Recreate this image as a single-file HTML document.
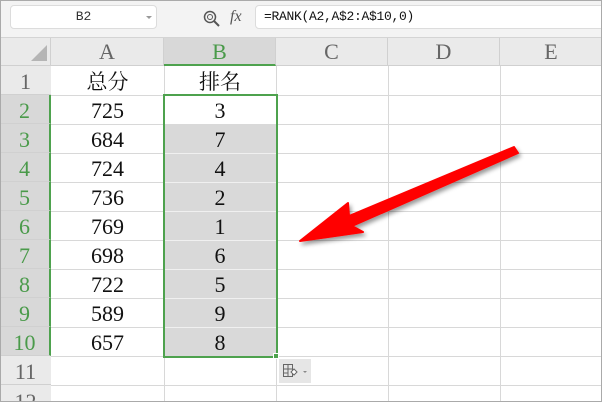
<!DOCTYPE html>
<html><head><style>
*{margin:0;padding:0;box-sizing:border-box}
html,body{width:602px;height:402px;overflow:hidden}
body{background:#fff;position:relative;font-family:"Liberation Serif","Noto Serif CJK SC",serif}
.abs{position:absolute}
.tb{left:0;top:0;width:602px;height:38px;background:#f3f3f3;border-bottom:1px solid #d4d4d4}
.nb{left:10px;top:5px;width:147px;height:24px;background:#fff;border:1px solid #dcdcdc;border-radius:4px;font-family:"Liberation Mono",monospace;font-size:13px;color:#333;text-align:center;line-height:22px}
.fb{left:255px;top:5px;width:350px;height:24px;background:#fff;border:1px solid #dcdcdc;border-radius:4px;font-family:"Liberation Mono",monospace;font-size:13px;color:#111;line-height:22px;padding-left:8px;letter-spacing:-0.3px}
.ch{top:38px;height:28px;background:#eaeaea;border-right:1px solid #d0d0d0;border-bottom:1px solid #d0d0d0;text-align:center;font-size:22px;line-height:28px;color:#666}
.rh{left:0;width:51px;height:29px;background:#eaeaea;border-bottom:1px solid #d0d0d0;text-align:center;font-size:22px;line-height:31px;color:#666}
.rh.s{background:#d8d8d8;color:#4a9a4a;border-right:2px solid #4ea24e}
.hl{left:51px;width:551px;height:1px;background:#d8d8d8}
.vl{top:66px;width:1px;height:336px;background:#d8d8d8}
.c{height:29px;text-align:center;font-size:22px;line-height:32px;color:#111}
.cj{font-family:"Noto Serif CJK SC",serif;font-size:21px;line-height:30px}
</style></head><body>
<div class="abs tb"></div>
<div class="abs nb">B2</div>
<div class="abs" style="left:146px;top:16px;width:0;height:0;border-left:3px solid transparent;border-right:3px solid transparent;border-top:3px solid #999"></div>
<svg class="abs" style="left:202px;top:9px" width="20" height="20"><circle cx="8" cy="8" r="5.5" fill="none" stroke="#555" stroke-width="1.5"/><circle cx="8" cy="8" r="2.5" fill="none" stroke="#555" stroke-width="1"/><path d="M12 12l5 5" stroke="#555" stroke-width="2"/></svg>
<div class="abs" style="left:230px;top:8px;font:italic 16px 'Liberation Serif',serif;color:#555">fx</div>
<div class="abs fb">=RANK(A2,A$2:A$10,0)</div>
<div class="abs ch" style="left:0;width:51px"></div>
<div class="abs" style="left:31px;top:45px;width:0;height:0;border-left:16px solid transparent;border-bottom:16px solid #b5b5b5"></div>
<div class="abs ch" style="left:51px;width:113px">A</div>
<div class="abs ch" style="left:164px;width:112px;background:#d8d8d8;color:#4a9a4a;border-bottom:2px solid #4ea24e">B</div>
<div class="abs ch" style="left:276px;width:112px">C</div>
<div class="abs ch" style="left:388px;width:112px">D</div>
<div class="abs ch" style="left:500px;width:102px;border-right:none">E</div>
<div class="abs hl" style="top:95px"></div><div class="abs hl" style="top:124px"></div><div class="abs hl" style="top:153px"></div><div class="abs hl" style="top:182px"></div><div class="abs hl" style="top:211px"></div><div class="abs hl" style="top:240px"></div><div class="abs hl" style="top:269px"></div><div class="abs hl" style="top:298px"></div><div class="abs hl" style="top:327px"></div><div class="abs hl" style="top:356px"></div><div class="abs hl" style="top:385px"></div>
<div class="abs vl" style="left:164px"></div><div class="abs vl" style="left:276px"></div><div class="abs vl" style="left:388px"></div><div class="abs vl" style="left:500px"></div>
<div class="abs" style="left:164px;top:124px;width:112px;height:233px;background:#d9d9d9"></div>
<div class="abs" style="left:164px;top:153px;width:112px;height:1px;background:#f0f0f0"></div>
<div class="abs" style="left:164px;top:182px;width:112px;height:1px;background:#f0f0f0"></div>
<div class="abs" style="left:164px;top:211px;width:112px;height:1px;background:#f0f0f0"></div>
<div class="abs" style="left:164px;top:240px;width:112px;height:1px;background:#f0f0f0"></div>
<div class="abs" style="left:164px;top:269px;width:112px;height:1px;background:#f0f0f0"></div>
<div class="abs" style="left:164px;top:298px;width:112px;height:1px;background:#f0f0f0"></div>
<div class="abs" style="left:164px;top:327px;width:112px;height:1px;background:#f0f0f0"></div>
<div class="abs rh" style="top:66px">1</div>
<div class="abs rh s" style="top:95px">2</div>
<div class="abs rh s" style="top:124px">3</div>
<div class="abs rh s" style="top:153px">4</div>
<div class="abs rh s" style="top:182px">5</div>
<div class="abs rh s" style="top:211px">6</div>
<div class="abs rh s" style="top:240px">7</div>
<div class="abs rh s" style="top:269px">8</div>
<div class="abs rh s" style="top:298px">9</div>
<div class="abs rh s" style="top:327px">10</div>
<div class="abs rh" style="top:356px">11</div>
<div class="abs rh" style="top:385px;line-height:34px">12</div>
<div class="abs" style="left:51px;top:66px;width:113px">
<div class="c cj">总分</div><div class="c">725</div><div class="c">684</div><div class="c">724</div><div class="c">736</div><div class="c">769</div><div class="c">698</div><div class="c">722</div><div class="c">589</div><div class="c">657</div></div>
<div class="abs" style="left:164px;top:66px;width:112px">
<div class="c cj">排名</div><div class="c">3</div><div class="c">7</div><div class="c">4</div><div class="c">2</div><div class="c">1</div><div class="c">6</div><div class="c">5</div><div class="c">9</div><div class="c">8</div></div>
<div class="abs" style="left:163px;top:94px;width:115px;height:264px;border:2px solid #4ea24e"></div>
<div class="abs" style="left:273px;top:353px;width:6px;height:6px;background:#4ea24e;border:1px solid #fff"></div>
<div class="abs" style="left:279px;top:359px;width:32px;height:24px;background:#e6e6e6"></div>
<svg class="abs" style="left:282px;top:363px" width="28" height="16"><rect x="1.5" y="1.5" width="9" height="12" fill="none" stroke="#666"/><path d="M1.5 6h9M1.5 10h5M6 1.5v12" stroke="#666"/><path d="M9 9l3-3 3 3-3 3z" fill="#fff" stroke="#666"/><path d="M21 8l2 2 2-2z" fill="#888"/></svg>
<svg class="abs" style="left:0;top:0" width="602" height="402">
<defs><filter id="sh"><feDropShadow dx="2" dy="3" stdDeviation="2" flood-opacity="0.4"/></filter></defs>
<g filter="url(#sh)" fill="#f00">
<path d="M514 147 L518 153 L352 226 L363 232 L300 241 L348 203 L349 216 Z" stroke="#f00" stroke-width="2" stroke-linejoin="round"/>
</g></svg>
<div class="abs" style="left:0;top:0;width:602px;height:402px;border:1px solid #aaa;pointer-events:none"></div>
</body></html>
